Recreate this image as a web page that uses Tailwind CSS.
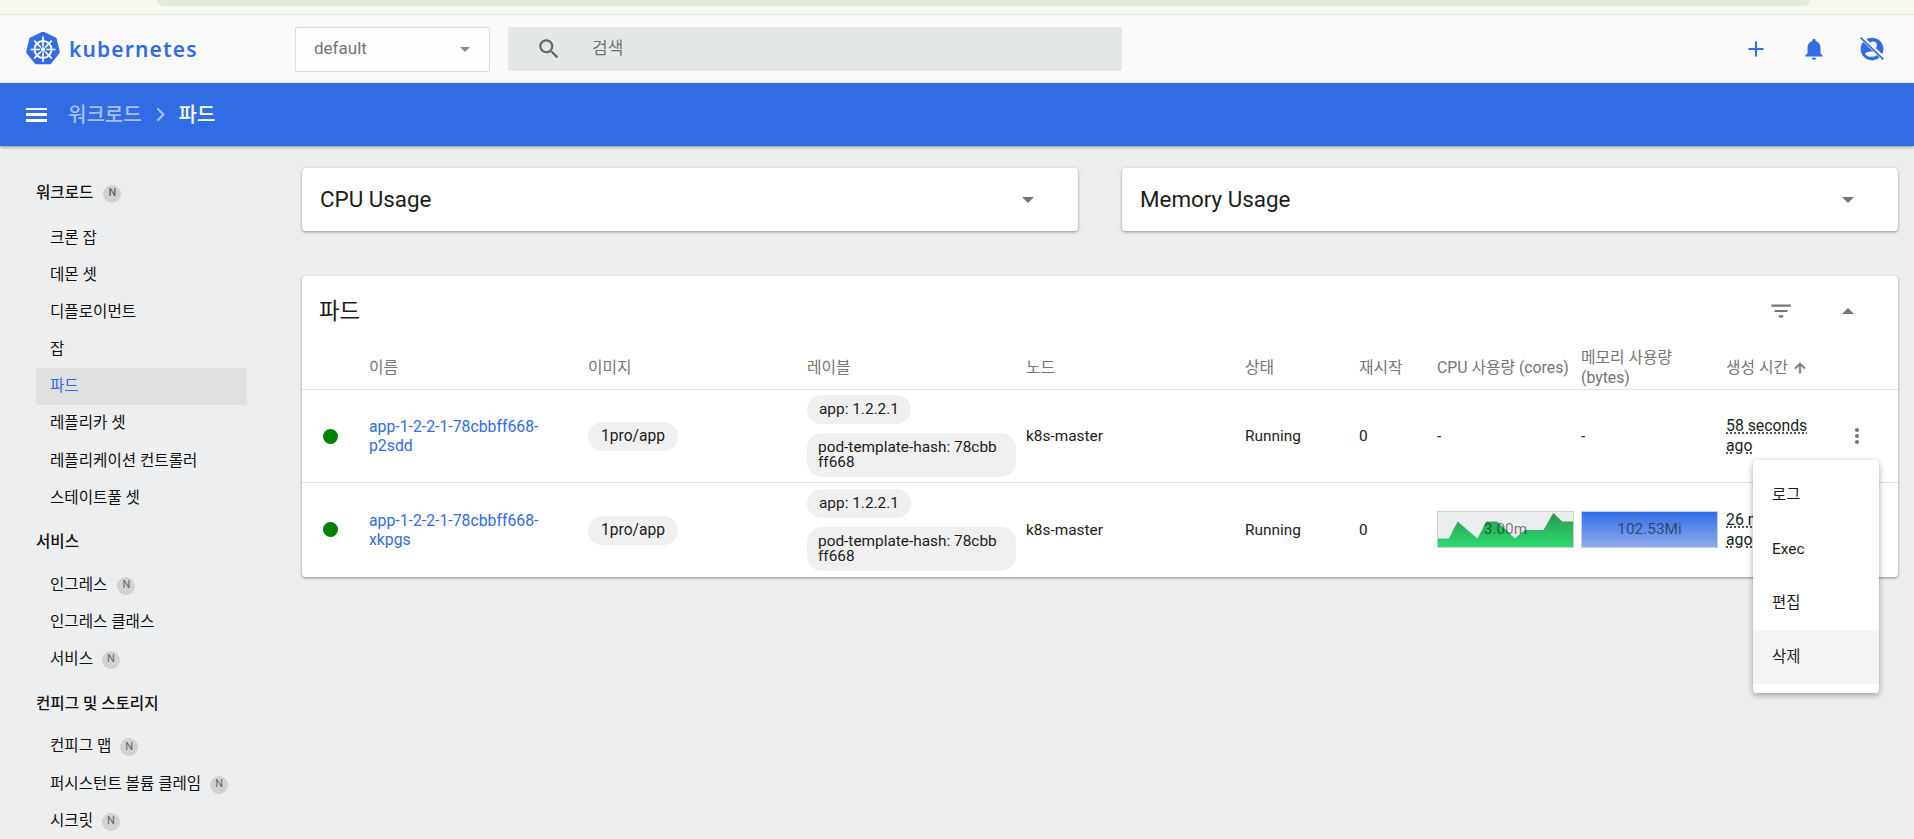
<!DOCTYPE html>
<html lang="ko">
<head>
  <meta charset="UTF-8" />
  <meta name="viewport" content="width=device-width, initial-scale=1" />
  <title>파드 - Kubernetes Dashboard</title>
  <script src="https://cdn.jsdelivr.net/npm/@tailwindcss/browser@4"></script>
</head>
<body class="h-[839px] overflow-hidden bg-[#edeef0] font-[Roboto,'Noto_Sans_CJK_KR',sans-serif] text-[15.4px] text-[#1c1c1c]">
  <!-- browser strip -->
  <div class="h-[15px] bg-[#f6f9f0] border-b border-[#e3e5df]">
    <div class="ml-[157px] mr-[104px] h-[6px] rounded-b-[12px] bg-[#e4ebdc]"></div>
  </div>

  <!-- toolbar -->
  <header class="h-[68px] bg-[#fafafa] flex items-center">
    <div class="w-[295px] pl-[26px] flex items-center gap-[9px]">
      <svg viewBox="0 0 34 34" class="w-[34px] h-[34px]">
        <path d="M17 0.5 L29.6 6.6 L32.8 20.3 L24 31.3 L10 31.3 L1.2 20.3 L4.4 6.6 Z" fill="#326ce5" stroke="#326ce5" stroke-width="2" stroke-linejoin="round"/>
        <g stroke="#fff" fill="none">
          <circle cx="17" cy="17.5" r="8.5" stroke-width="2"/>
          <path stroke-width="1.7" d="M17 4.5V14.5M17 20.5V30M4.5 17.5H14M20 17.5H29.5M8.2 8.7L15 15.5M19 19.5L25.8 26.3M25.8 8.7L19 15.5M15 19.5L8.2 26.3"/>
        </g>
        <circle cx="17" cy="17.5" r="2.2" fill="#fff"/>
      </svg>
      <span class="mt-[2px] font-['Noto_Sans'] font-semibold text-[21px] tracking-[1.15px] text-[#326ce5]">kubernetes</span>
    </div>
    <div class="w-[195px] h-[45px] border border-[#dcdcdc] rounded-[2px] bg-white/60 flex items-center justify-between pl-[18px] pr-[19px] text-[17px] text-[#757575]">
      <span>default</span>
      <svg viewBox="0 0 10 5" class="w-[10px] h-[5px]"><path d="M0 0H10L5 5Z" fill="#8a8a8a"/></svg>
    </div>
    <div class="ml-[18px] w-[614px] h-[44px] bg-[#e5e8e8] rounded-[2px] flex items-center pl-[28px] text-[17px] text-[#757575]">
      <svg viewBox="0 0 24 24" class="w-[26px] h-[26px]"><path fill="#666" d="M15.5 14h-.79l-.28-.27A6.471 6.471 0 0 0 16 9.5 6.5 6.5 0 1 0 9.5 16c1.61 0 3.09-.59 4.23-1.57l.27.28v.79l5 4.99L20.49 19l-4.99-5zm-6 0C7.01 14 5 11.99 5 9.5S7.01 5 9.5 5 14 7.01 14 9.5 11.99 14 9.5 14z"/></svg>
      <span class="ml-[30px]">검색</span>
    </div>
    <div class="ml-auto flex items-center gap-[32px] pr-[29px] text-[#326ce5]">
      <svg viewBox="0 0 24 24" class="w-[26px] h-[26px]"><path fill="currentColor" d="M19 13h-6v6h-2v-6H5v-2h6V5h2v6h6v2z"/></svg>
      <svg viewBox="0 0 24 24" class="w-[26px] h-[26px]"><path fill="currentColor" d="M12 22c1.1 0 2-.9 2-2h-4c0 1.1.9 2 2 2zm6-6v-5c0-3.07-1.63-5.64-4.5-6.32V4c0-.83-.67-1.5-1.5-1.5s-1.5.67-1.5 1.5v.68C7.64 5.36 6 7.92 6 11v5l-2 2v1h16v-1l-2-2z"/></svg>
      <svg viewBox="0 0 24 24" class="w-[26px] h-[26px]">
        <circle cx="12" cy="12" r="10.5" fill="currentColor"/>
        <circle cx="13" cy="8.5" r="3.4" fill="#fafafa"/>
        <path d="M5.5 16.5c2-3 9-3 12 0-3 3.5-9 3.5-12 0z" fill="#fafafa"/>
        <path d="M2 1L23 21" stroke="#fafafa" stroke-width="4"/>
        <path d="M1.5 1.5L22.5 21.5" stroke="currentColor" stroke-width="1.6"/>
      </svg>
    </div>
  </header>

  <!-- action bar -->
  <div class="relative h-[63px] bg-[#326ce5] shadow-[0_1px_3px_rgba(0,0,0,0.4)] flex items-center pl-[26px] text-[20px] font-medium">
    <div class="w-[21px] h-[14px] flex flex-col justify-between">
      <div class="h-[2.5px] bg-white"></div>
      <div class="h-[2.5px] bg-white"></div>
      <div class="h-[2.5px] bg-white"></div>
    </div>
    <span class="ml-[21px] mt-[1px] text-[#a6c0f3]">워크로드</span>
    <svg viewBox="0 0 24 24" class="w-[27px] h-[27px] ml-[5px]"><path fill="#a6c0f3" d="M10 6 8.59 7.41 13.17 12l-4.58 4.59L10 18l6-6z"/></svg>
    <span class="ml-[5px] mt-[1px] text-white">파드</span>
  </div>

  <div class="flex relative">
    <!-- sidebar -->
    <aside class="w-[302px] shrink-0 pl-[36px] pr-[55px] pt-[29px] text-[15.6px] text-[#111]">
      <div class="h-[37px] flex items-center gap-[10px] font-medium">워크로드 <span class="w-[18px] h-[18px] rounded-full bg-[#d2d2d2] text-[#666] text-[11px] flex items-center justify-center">N</span></div>
      <div class="mt-[8px] flex flex-col">
        <a class="h-[37px] flex items-center pl-[14px]">크론 잡</a>
        <a class="h-[37px] flex items-center pl-[14px]">데몬 셋</a>
        <a class="h-[37px] flex items-center pl-[14px]">디플로이먼트</a>
        <a class="h-[37px] flex items-center pl-[14px]">잡</a>
        <a class="h-[37px] flex items-center pl-[14px] rounded-[2px] bg-[#e0e0e0] text-[#326ce5]">파드</a>
        <a class="h-[38px] flex items-center pl-[14px]">레플리카 셋</a>
        <a class="h-[37px] flex items-center pl-[14px]">레플리케이션 컨트롤러</a>
        <a class="h-[37px] flex items-center pl-[14px]">스테이트풀 셋</a>
      </div>
      <div class="mt-[7px] h-[37px] flex items-center font-medium">서비스</div>
      <div class="mt-[6px] flex flex-col">
        <a class="h-[37px] flex items-center gap-[10px] pl-[14px]">인그레스 <span class="w-[18px] h-[18px] rounded-full bg-[#d2d2d2] text-[#666] text-[11px] flex items-center justify-center">N</span></a>
        <a class="h-[37px] flex items-center pl-[14px]">인그레스 클래스</a>
        <a class="h-[37px] flex items-center gap-[9px] pl-[14px]">서비스 <span class="w-[18px] h-[18px] rounded-full bg-[#d2d2d2] text-[#666] text-[11px] flex items-center justify-center">N</span></a>
      </div>
      <div class="mt-[8px] h-[37px] flex items-center font-medium whitespace-nowrap">컨피그 및 스토리지</div>
      <div class="mt-[5px] flex flex-col">
        <a class="h-[38px] flex items-center gap-[9px] pl-[14px]">컨피그 맵 <span class="w-[18px] h-[18px] rounded-full bg-[#d2d2d2] text-[#666] text-[11px] flex items-center justify-center">N</span></a>
        <a class="h-[37px] flex items-center gap-[9px] pl-[14px] whitespace-nowrap">퍼시스턴트 볼륨 클레임 <span class="w-[18px] h-[18px] rounded-full bg-[#d2d2d2] text-[#666] text-[11px] flex items-center justify-center">N</span></a>
        <a class="h-[37px] flex items-center gap-[9px] pl-[14px]">시크릿 <span class="w-[18px] h-[18px] rounded-full bg-[#d2d2d2] text-[#666] text-[11px] flex items-center justify-center">N</span></a>
      </div>
    </aside>

    <!-- main -->
    <main class="flex-1 pt-[22px] pr-[16px]">
      <div class="grid grid-cols-2 gap-[44px]">
        <div class="h-[63px] bg-white rounded-[4px] shadow-[0_1px_3px_rgba(0,0,0,0.4)] flex items-center justify-between pl-[18px] pr-[44px] text-[22.4px]">
          <span>CPU Usage</span>
          <svg viewBox="0 0 10 5" class="w-[12px] h-[6px]"><path d="M0 0H10L5 5Z" fill="#757575"/></svg>
        </div>
        <div class="h-[63px] bg-white rounded-[4px] shadow-[0_1px_3px_rgba(0,0,0,0.4)] flex items-center justify-between pl-[18px] pr-[44px] text-[22.4px]">
          <span>Memory Usage</span>
          <svg viewBox="0 0 10 5" class="w-[12px] h-[6px]"><path d="M0 0H10L5 5Z" fill="#757575"/></svg>
        </div>
      </div>

      <!-- pods card -->
      <section class="mt-[45px] bg-white rounded-[4px] shadow-[0_1px_3px_rgba(0,0,0,0.4)]">
        <div class="h-[70px] flex items-center pl-[17px] pr-[44px] text-[22.4px]">
          <span class="mt-[1px]">파드</span>
          <svg viewBox="0 0 24 24" class="ml-auto w-[26px] h-[26px]"><path fill="#757575" d="M10 18h4v-2h-4v2zM3 6v2h18V6H3zm3 7h12v-2H6v2z"/></svg>
          <svg viewBox="0 0 10 5" class="ml-[48px] w-[12px] h-[6px]"><path d="M5 0L10 5H0Z" fill="#757575"/></svg>
        </div>
        <div class="h-[44px] border-b border-[#e2e2e2] grid grid-cols-[67px_219px_219px_219px_219px_114px_78px_144px_145px_1fr] items-center text-[15.8px] leading-[20px] text-[#757575]">
          <span></span><span>이름</span><span>이미지</span><span>레이블</span><span>노드</span><span>상태</span><span>재시작</span>
          <span class="whitespace-nowrap">CPU 사용량 (cores)</span>
          <span class="pr-[30px]">메모리 사용량 (bytes)</span>
          <span class="flex items-center gap-[4px]">생성 시간 <svg viewBox="0 0 24 24" class="w-[16px] h-[16px]"><path fill="#757575" stroke="#757575" d="m4 12 1.41 1.41L11 7.83V20h2V7.83l5.58 5.59L20 12l-8-8-8 8z"/></svg></span>
        </div>

        <div class="h-[93px] border-b border-[#e2e2e2] grid grid-cols-[67px_219px_219px_219px_219px_114px_78px_144px_145px_112px_1fr] items-center leading-[19px]">
          <span class="ml-[21px] w-[15px] h-[15px] rounded-full bg-[#008000]"></span>
          <a class="text-[15.8px] text-[#326ce5] pr-[30px]">app-1-2-2-1-78cbbff668-p2sdd</a>
          <span><span class="inline-flex items-center h-[29px] px-[13px] text-[15.6px] rounded-[15px] bg-[#f0f0f0]">1pro/app</span></span>
          <div class="flex flex-col items-start gap-[9px]">
            <span class="flex items-center h-[29px] px-[12px] rounded-[15px] bg-[#f0f0f0]">app: 1.2.2.1</span>
            <span class="w-[209px] py-[7px] pl-[11px] pr-[16px] leading-[15px] rounded-[15px] bg-[#f0f0f0] break-all">pod-template-hash: 78cbbff668</span>
          </div>
          <span>k8s-master</span><span>Running</span><span>0</span><span>-</span><span>-</span>
          <span class="w-[92px] text-[15.8px] leading-[20px] underline decoration-dotted underline-offset-[2px]">58 seconds ago</span>
          <svg viewBox="0 0 24 24" class="ml-[7px] w-[24px] h-[24px]"><path fill="#757575" d="M12 8c1.1 0 2-.9 2-2s-.9-2-2-2-2 .9-2 2 .9 2 2 2zm0 2c-1.1 0-2 .9-2 2s.9 2 2 2 2-.9 2-2-.9-2-2-2zm0 6c-1.1 0-2 .9-2 2s.9 2 2 2 2-.9 2-2-.9-2-2-2z"/></svg>
        </div>

        <div class="h-[94px] grid grid-cols-[67px_219px_219px_219px_219px_114px_78px_144px_145px_112px_1fr] items-center leading-[19px]">
          <span class="ml-[21px] mb-[1px] w-[15px] h-[15px] rounded-full bg-[#008000]"></span>
          <a class="text-[15.8px] text-[#326ce5] pr-[30px]">app-1-2-2-1-78cbbff668-xkpgs</a>
          <span><span class="inline-flex items-center h-[29px] px-[13px] text-[15.6px] rounded-[15px] bg-[#f0f0f0]">1pro/app</span></span>
          <div class="flex flex-col items-start gap-[9px]">
            <span class="flex items-center h-[29px] px-[12px] rounded-[15px] bg-[#f0f0f0]">app: 1.2.2.1</span>
            <span class="w-[209px] py-[7px] pl-[11px] pr-[16px] leading-[15px] rounded-[15px] bg-[#f0f0f0] break-all">pod-template-hash: 78cbbff668</span>
          </div>
          <span>k8s-master</span><span>Running</span><span>0</span>
          <div class="relative mb-[2px] w-[137px] h-[37px] border border-[#d0d0d0] bg-[#edeef0] flex items-center justify-center">
            <svg viewBox="0 0 137 37" preserveAspectRatio="none" class="absolute inset-0 w-full h-full">
              <defs><linearGradient id="cpuFill" x1="0" y1="0" x2="0" y2="1"><stop offset="0" stop-color="#2a9550"/><stop offset="1" stop-color="#2ddc6f"/></linearGradient></defs>
              <path d="M0 28H11L20 10L40 28L49 10H60L78 28L88 19H107L117 1L126 10H137V37H0Z" fill="url(#cpuFill)"/>
            </svg>
            <span class="relative text-[#00000080]">3.00m</span>
          </div>
          <div class="relative mb-[2px] w-[137px] h-[37px] border border-[#c5cfe2] flex items-center justify-center bg-gradient-to-b from-[#326ce5] to-[#8cabec]">
            <span class="text-[#00000080]">102.53Mi</span>
          </div>
          <span class="w-[92px] text-[15.8px] leading-[20px] underline decoration-dotted underline-offset-[2px]">26 minutes ago</span>
          <span></span>
        </div>
      </section>
    </main>

    <!-- row action menu -->
    <div class="absolute left-[1753px] top-[314px] w-[126px] pt-[8px] pb-[9px] bg-white rounded-[4px] shadow-[0_2px_6px_rgba(0,0,0,0.35)] flex flex-col">
      <a class="h-[54px] flex items-center pl-[19px] pt-[1px]">로그</a>
      <a class="h-[54px] flex items-center pl-[19px] pt-[1px]">Exec</a>
      <a class="h-[54px] flex items-center pl-[19px] pt-[1px]">편집</a>
      <a class="h-[54px] flex items-center pl-[19px] pt-[1px] bg-[#f5f5f5]">삭제</a>
    </div>
  </div>
</body>
</html>
